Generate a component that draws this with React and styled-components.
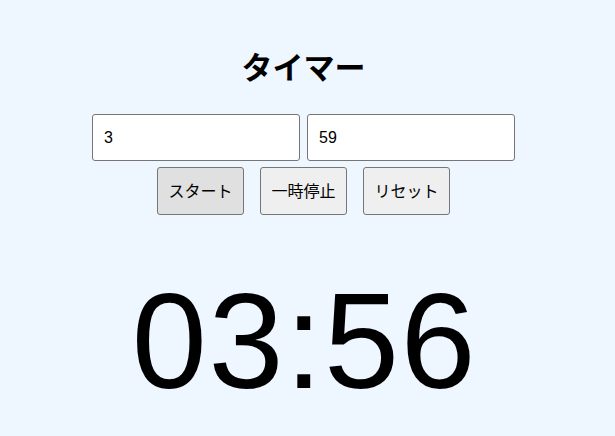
import React, { useState } from 'react';
import styled, { createGlobalStyle } from 'styled-components';

const Global = createGlobalStyle`
  body {
    margin: 0;
    background: #eef6ff;
    font-family: "Liberation Sans", "Noto Sans CJK JP", sans-serif;
    color: #000;
  }
`;

const Page = styled.div`
  padding-right: 8px;
  display: flex;
  flex-direction: column;
  align-items: center;
`;

const Title = styled.h1`
  margin: 46px 0 28px;
  font-family: "Noto Sans CJK JP", sans-serif;
  font-size: 31px;
  line-height: 40px;
  font-weight: 700;
`;

const Row = styled.div`
  display: flex;
  justify-content: center;
  gap: ${p => p.$gap}px;
  margin-top: ${p => p.$top || 0}px;
`;

const Input = styled.input`
  box-sizing: border-box;
  width: 208px;
  height: 47px;
  padding: 0 11px;
  border: 1px solid #767676;
  border-radius: 3px;
  background: #fff;
  font-family: "Liberation Sans", sans-serif;
  font-size: 16px;
  color: #000;
  outline: 0;
`;

const Button = styled.button`
  box-sizing: border-box;
  width: 87px;
  height: 48px;
  padding: 0 0 3px;
  border: 1px solid #767676;
  border-radius: 3px;
  background: ${p => (p.$active ? '#e0e0e0' : '#efefef')};
  font-family: "Noto Sans CJK JP", sans-serif;
  font-size: 16px;
  color: #000;
`;

const Display = styled.div`
  margin-top: 51px;
  padding-left: 2px;
  font-family: "Liberation Sans", sans-serif;
  font-size: 135px;
  line-height: 151px;
  letter-spacing: 1.5px;
`;

export default function App() {
  const [min, setMin] = useState('3');
  const [sec, setSec] = useState('59');

  return (
    <Page>
      <Global />
      <Title>タイマー</Title>
      <Row $gap={7}>
        <Input value={min} onChange={e => setMin(e.target.value)} />
        <Input value={sec} onChange={e => setSec(e.target.value)} />
      </Row>
      <Row $gap={16} $top={6}>
        <Button $active>スタート</Button>
        <Button>一時停止</Button>
        <Button>リセット</Button>
      </Row>
      <Display>03:56</Display>
    </Page>
  );
}
